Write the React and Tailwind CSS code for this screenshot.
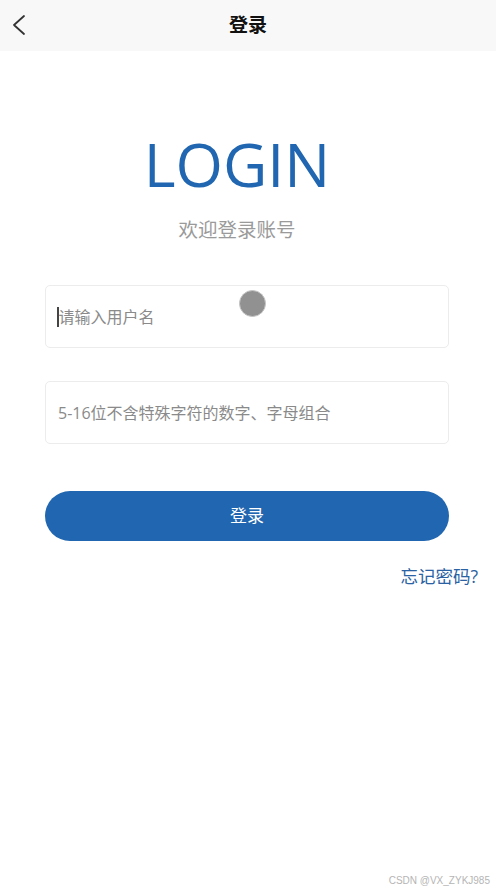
export default function App() {
  const font = { fontFamily: '"Open Sans", "Noto Sans CJK SC", sans-serif' };
  return (
    <div className="w-[496px] h-[893px] bg-white relative overflow-hidden" style={font}>
      <div className="h-[51px] bg-[#f8f8f8] flex items-center relative">
        <svg className="absolute left-[11px] top-[14px]" width="16" height="22" viewBox="0 0 16 22" fill="none">
          <path d="M13 2 L3 11 L13 20" stroke="#333" strokeWidth="1.8" strokeLinecap="round" strokeLinejoin="round" />
        </svg>
        <div className="w-full text-center text-[19px] font-bold text-[#111]">登录</div>
      </div>
      <div className="flex flex-col items-center pr-[22px]">
        <div className="mt-[77px] text-[61px] leading-[72px] text-[#2166b0]">LOGIN</div>
        <div className="mt-[17px] text-[19.5px] leading-[26px] text-[#9a9a9a]">欢迎登录账号</div>
      </div>
      <div className="pl-[45px] pr-[47px] mt-[42px] flex flex-col">
        <div className="h-[63px] border border-[#ececec] rounded-[5px] flex items-center pl-[11px] relative">
          <div className="w-[1.5px] h-[20px] bg-[#444]"></div>
          <span className="text-[16px] text-[#8a8a8a]">请输入用户名</span>
          <div className="absolute left-[193px] top-[4px] w-[27px] h-[27px] rounded-full bg-[#919191] border border-[#c4c4c4]"></div>
        </div>
        <div className="mt-[33px] h-[63px] border border-[#ececec] rounded-[5px] flex items-center pl-[12px]">
          <span className="text-[16px] text-[#8a8a8a]">5-16位不含特殊字符的数字、字母组合</span>
        </div>
        <button className="mt-[47px] h-[50px] rounded-full bg-[#2166b0] text-white text-[17px]">登录</button>
      </div>
      <div className="flex justify-end pr-[18px] mt-[22px]">
        <span className="text-[17.5px] text-[#2a62a3]">忘记密码?</span>
      </div>
      <div className="absolute right-[6px] bottom-[5px] text-[10px] text-[#b5b5b5]" style={{ fontFamily: '"Liberation Sans", sans-serif' }}>CSDN @VX_ZYKJ985</div>
    </div>
  );
}
